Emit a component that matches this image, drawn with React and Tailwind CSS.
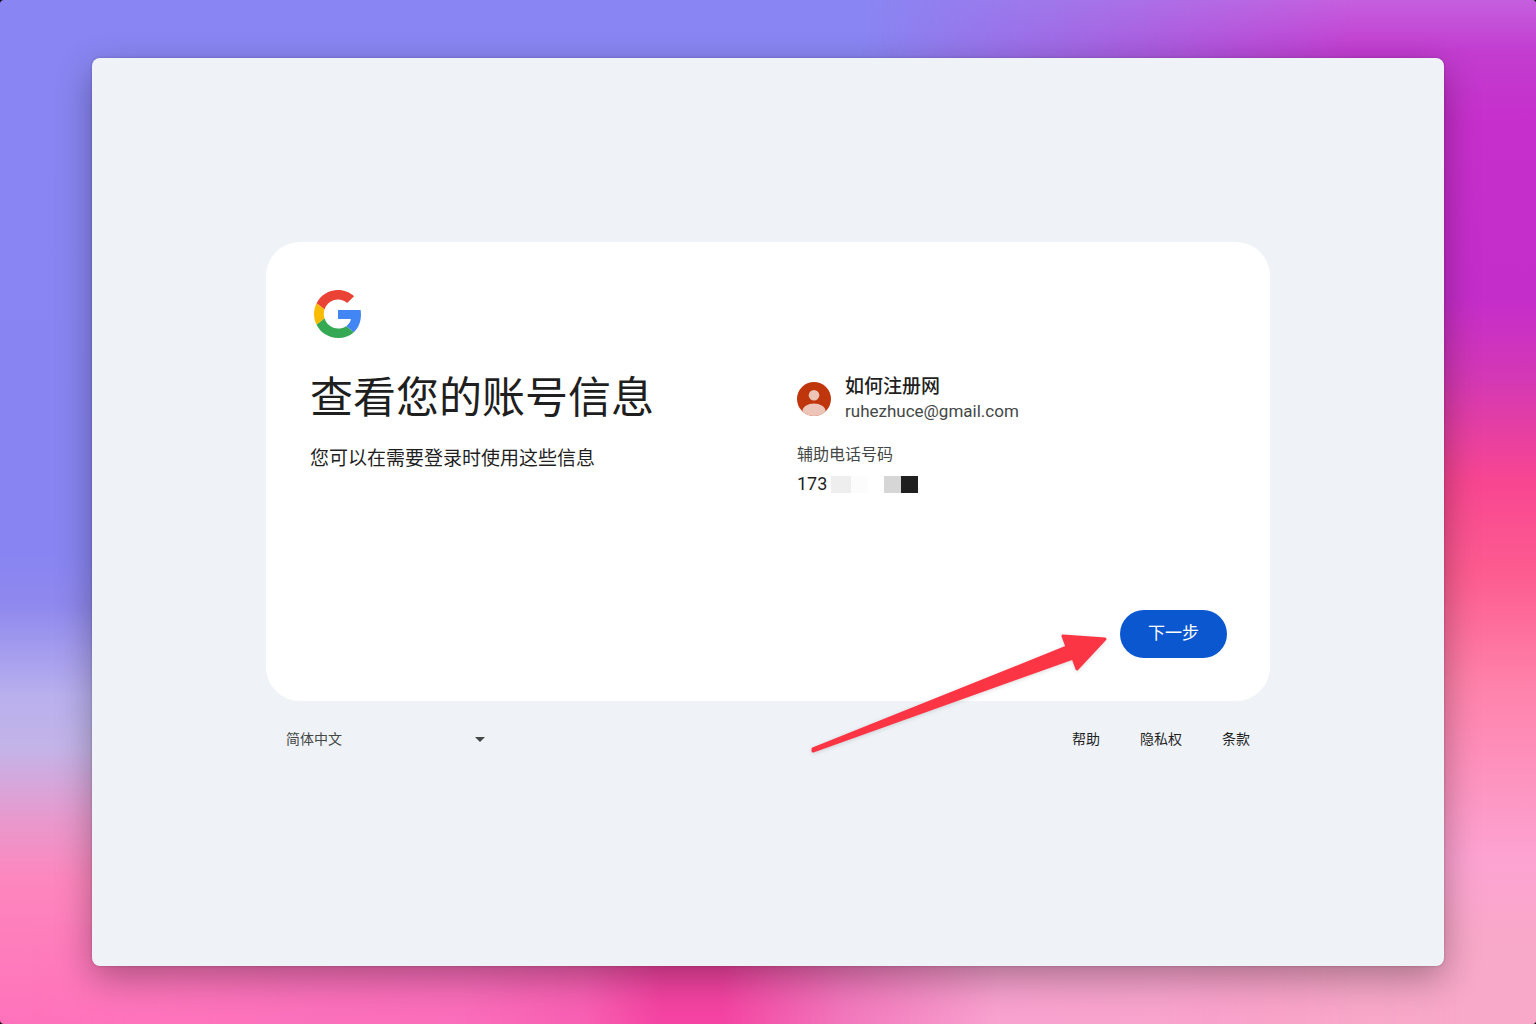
import React from "react";

const LINKS = ["帮助", "隐私权", "条款"];

function GoogleLogo() {
	return (
		<svg viewBox="0 0 48 48" className="ml-1 h-12 w-12" aria-hidden="true">
			<path
				fill="#EA4335"
				d="M24 9.5c3.54 0 6.71 1.22 9.21 3.6l6.85-6.85C35.9 2.38 30.47 0 24 0 14.62 0 6.51 5.38 2.56 13.22l7.98 6.19C12.43 13.72 17.74 9.5 24 9.5z"
			/>
			<path
				fill="#4285F4"
				d="M46.98 24.55c0-1.57-.15-3.09-.38-4.55H24v9.02h12.94c-.58 2.96-2.26 5.48-4.78 7.18l7.73 6c4.51-4.18 7.09-10.36 7.09-17.65z"
			/>
			<path
				fill="#FBBC05"
				d="M10.53 28.59c-.48-1.45-.76-2.99-.76-4.59s.27-3.14.76-4.59l-7.98-6.19C.92 16.46 0 20.12 0 24c0 3.88.92 7.54 2.56 10.78l7.97-6.19z"
			/>
			<path
				fill="#34A853"
				d="M24 48c6.48 0 11.93-2.13 15.89-5.81l-7.73-6c-2.15 1.45-4.92 2.3-8.16 2.3-6.26 0-11.57-4.22-13.47-9.91l-7.98 6.19C6.51 42.62 14.62 48 24 48z"
			/>
		</svg>
	);
}

function Avatar() {
	return (
		<svg viewBox="0 0 34 34" className="h-[34px] w-[34px] shrink-0" aria-hidden="true">
			<defs>
				<clipPath id="avatar-clip">
					<circle cx="17" cy="17" r="17" />
				</clipPath>
			</defs>
			<g clipPath="url(#avatar-clip)">
				<rect width="34" height="34" fill="#bf360c" />
				<circle cx="17" cy="13.3" r="5.3" fill="#ecc4b8" />
				<ellipse cx="17" cy="29.2" rx="11.6" ry="7.8" fill="#ecc4b8" />
			</g>
		</svg>
	);
}

function Arrow() {
	return (
		<svg
			viewBox="0 0 300 124"
			className="pointer-events-none absolute right-[161px] -bottom-[55px] h-[124px] w-[300px] overflow-visible drop-shadow-sm"
			aria-hidden="true"
		>
			<path
				d="M4 117 L258 15 L254 4 L296 7 L268 37 L264 26 L4 119 Z"
				fill="#fc3545"
				stroke="#fc3545"
				strokeWidth="3"
				strokeLinejoin="round"
			/>
		</svg>
	);
}

export default function App() {
	return (
		<div className="bg-black font-['Roboto','Noto_Sans_CJK_SC',sans-serif] text-[#1f1f1f]">
			<div className="relative isolate flex min-h-screen overflow-hidden rounded bg-linear-[to_bottom,#8986f3_0%,#8885f2_54%,#8f88ee_59%,#b9b0ee_68%,#c3b4e8_73%,#e899cd_80%,#fd86bd_86%,#ff72bb_100%] px-[6%] py-[58px]">
				{/* Backdrop */}
				<div className="absolute inset-0 -z-10 bg-linear-[to_bottom,#c55fde_0%,#c23dd0_5%,#c72fcc_12%,#c52dcb_29%,#d438b4_37%,#f84691_47%,#fd5c90_56%,#fe82ab_67%,#fda3d2_84%,#f8a8c8_92%,#f8a8c8_100%] mask-[linear-gradient(to_right,transparent_56%,black_88%)]"></div>
				<div className="absolute inset-x-0 bottom-0 -z-10 h-[100px] bg-linear-[to_right,#ff78bd_0%,#fa6dba_30%,#f85fb2_38%,#f443a2_43%,#f443a2_47%,#f277bc_55%,#f8a2cf_65%,#f8a8c8_100%] mask-[linear-gradient(to_right,transparent_2%,black_20%,black_75%,transparent_95%)]"></div>

				<main className="flex flex-1 flex-col items-center rounded-lg bg-[#eff3f8] px-6 pt-[184px] pb-[184px] shadow-[0_12px_36px_rgba(0,0,0,0.32),0_0_3px_rgba(0,0,0,0.2)]">
					<div className="w-full max-w-[1004px]">
						{/* Account card */}
						<section className="relative rounded-[34px] bg-white pt-12 pr-[43px] pb-[43px] pl-11">
							<GoogleLogo />
							<div className="mt-[33px] grid grid-cols-[487px_1fr]">
								<div>
									<h1 className="text-[43px] leading-[54px]">查看您的账号信息</h1>
									<p className="mt-5 text-[19px] leading-7">
										您可以在需要登录时使用这些信息
									</p>
								</div>
								<div className="pt-[3px]">
									<div className="flex items-center gap-[14px]">
										<Avatar />
										<div>
											<div className="text-[19px] leading-[25px] font-medium">如何注册网</div>
											<div className="text-[17px] leading-[25px] text-[#444746]">
												ruhezhuce@gmail.com
											</div>
										</div>
									</div>
									<div className="mt-[17px] text-base leading-7 text-[#444746]">辅助电话号码</div>
									<div className="flex items-center text-lg leading-[30px]">
										<span>173</span>
										<span className="ml-1 h-[17px] w-5 bg-[#eeeeee]"></span>
										<span className="h-[17px] w-[17px] bg-[#fcfcfc]"></span>
										<span className="ml-4 h-[17px] w-[17px] bg-[#d6d6d6]"></span>
										<span className="h-[17px] w-[17px] bg-[#1f1f1f]"></span>
									</div>
								</div>
							</div>
							<div className="mt-[111px] flex justify-end">
								<button
									type="button"
									className="h-12 rounded-full bg-[#0b57d0] px-7 text-[17px] text-white"
								>
									下一步
								</button>
							</div>
							<Arrow />
						</section>

						{/* Footer */}
						<footer className="mt-6 flex items-center justify-between px-5 text-sm leading-7">
							<div className="relative flex w-[199px] items-center">
								<select
									aria-label="语言"
									className="w-full appearance-none bg-transparent text-[#444746] outline-none"
								>
									<option>简体中文</option>
								</select>
								<svg
									viewBox="0 0 10 5"
									className="pointer-events-none absolute right-0 h-[5px] w-[10px]"
									aria-hidden="true"
								>
									<path d="M0 0h10L5 5z" fill="#444746" />
								</svg>
							</div>
							<nav className="flex gap-10">
								{LINKS.map((link) => (
									<a key={link} href="#">
										{link}
									</a>
								))}
							</nav>
						</footer>
					</div>
				</main>
			</div>
		</div>
	);
}
